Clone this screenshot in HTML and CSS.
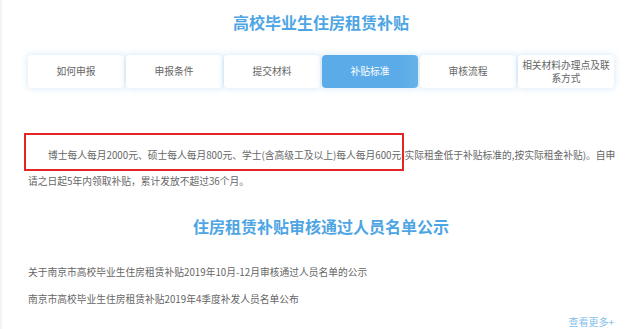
FILE: index.html
```html
<!DOCTYPE html>
<html lang="zh-CN">
<head>
<meta charset="utf-8">
<link rel="stylesheet" href="styles.css">
</head>
<body>
<div class="page">
  <h1 class="title">高校毕业生住房租赁补贴</h1>
  <div class="tabs">
    <div class="tab">如何申报</div>
    <div class="tab">申报条件</div>
    <div class="tab">提交材料</div>
    <div class="tab active">补贴标准</div>
    <div class="tab">审核流程</div>
    <div class="tab two">相关材料办理点及联<br>系方式</div>
  </div>
  <p class="desc">博士每人每月2000元、硕士每人每月800元、学士(含高级工及以上)每人每月600元(实际租金低于补贴标准的,按实际租金补贴)。自申请之日起5年内领取补贴，累计发放不超过36个月。</p>
  <h2 class="title sub">住房租赁补贴审核通过人员名单公示</h2>
  <ul class="list">
    <li>关于南京市高校毕业生住房租赁补贴2019年10月-12月审核通过人员名单的公示</li>
    <li>南京市高校毕业生住房租赁补贴2019年4季度补发人员名单公布</li>
  </ul>
  <div class="more">查看更多+</div>
  <div class="mark"></div>
</div>
</body>
</html>
```

FILE: styles.css
```css
html, body {
  margin: 0;
  padding: 0;
  background: #fff;
}
body {
  font-family: "Noto Sans CJK SC", "Noto Sans", sans-serif;
  color: #666;
}
.page {
  position: relative;
  width: 640px;
  height: 329px;
  overflow: hidden;
  box-sizing: border-box;
  border-left: 2px solid #f4f4f4;
}
.title {
  margin: 0;
  padding-top: 10px;
  font-size: 16px;
  line-height: 24px;
  font-weight: bold;
  color: #4ea5e4;
  text-align: center;
}
.tabs {
  display: grid;
  grid-template-columns: repeat(6, 96px);
  gap: 2px;
  margin: 21px 0 0 26px;
}
.tab {
  height: 33px;
  display: flex;
  align-items: center;
  justify-content: center;
  text-align: center;
  background: #fff;
  border-radius: 4px;
  box-shadow: 0 0 7px rgba(90, 160, 225, 0.28);
  font-size: 9.75px;
  line-height: 13px;
  color: #666;
}
.tab.active {
  background: linear-gradient(90deg, #5aabe7 0%, #5aabe7 80%, #67b3ea 100%);
  color: #fff;
}
.desc {
  margin: 54px 0 0;
  padding: 0 16px 0 26px;
  font-size: 9.75px;
  line-height: 26px;
  text-indent: 20px;
  color: #666;
}
.sub {
  padding-top: 20px;
}
.list {
  list-style: none;
  margin: 21px 0 0;
  padding: 0 0 0 26px;
  font-size: 9.75px;
  line-height: 27px;
  color: #666;
}
.more {
  margin-top: 2px;
  padding-right: 26px;
  text-align: right;
  font-size: 10px;
  line-height: 14px;
  color: #86bfec;
}
.mark {
  position: absolute;
  left: 22px;
  top: 133px;
  width: 376px;
  height: 34px;
  border: 2px solid #e52424;
}
```
